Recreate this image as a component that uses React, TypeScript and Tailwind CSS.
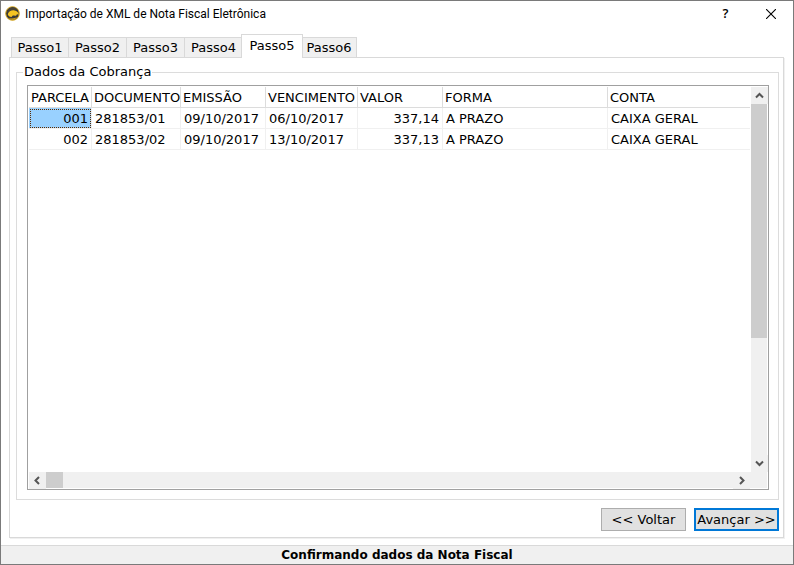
import React from "react";

const tabs = ["Passo1", "Passo2", "Passo3", "Passo4", "Passo5", "Passo6"];
const activeTab = "Passo5";

const columns = [
  { label: "PARCELA", width: "w-[63px]" },
  { label: "DOCUMENTO", width: "w-[89px]" },
  { label: "EMISSÃO", width: "w-[85px]" },
  { label: "VENCIMENTO", width: "w-[92px]" },
  { label: "VALOR", width: "w-[85px]" },
  { label: "FORMA", width: "w-[165px]" },
  { label: "CONTA", width: "" },
];

const rows = [
  ["001", "281853/01", "09/10/2017", "06/10/2017", "337,14", "A PRAZO", "CAIXA GERAL"],
  ["002", "281853/02", "09/10/2017", "13/10/2017", "337,13", "A PRAZO", "CAIXA GERAL"],
];

const rightAligned = [0, 4];

const chevrons = {
  up: "M1 6.5 L4.5 3 L8 6.5",
  down: "M1 2.5 L4.5 6 L8 2.5",
  left: "M6 1 L2.5 4.5 L6 8",
  right: "M3 1 L6.5 4.5 L3 8",
};

function ScrollButton({ direction, label }: { direction: keyof typeof chevrons; label: string }) {
  return (
    <button type="button" aria-label={label} className="flex size-[17px] shrink-0 items-center justify-center bg-[#f0f0f0]">
      <svg width="9" height="9" viewBox="0 0 9 9" fill="none" stroke="#555" strokeWidth="2">
        <path d={chevrons[direction]} />
      </svg>
    </button>
  );
}

function AppIcon() {
  return (
    <svg width="15" height="15" viewBox="0 0 15 15" aria-hidden="true">
      <circle cx="7.5" cy="7.5" r="6.8" fill="#3a3a38" stroke="#d9a91c" strokeWidth="1" />
      <path d="M2 5 C3.4 2.4 6 1 8 1.2 C10.5 1.4 12 2.6 12.8 4 C10 3.4 6 3.6 3 6.6 Z" fill="#4a4436" />
      <path d="M2.8 8.2 C3.6 5.4 6.5 3.8 9.6 4.4 C12 4.8 13.6 6.4 13.9 8.4 L12 8.2 L11 9.8 L8.6 9.4 C7.4 9.4 7 10 6.6 11 C4.6 10.8 3 9.8 2.8 8.2 Z" fill="#f5c421" />
      <path d="M3.4 12 C6 13 9 12.8 12 11.2 C9.8 14.2 6.4 14.4 3.4 12 Z" fill="#e3b01f" />
    </svg>
  );
}

function TitleBar() {
  return (
    <header className="flex h-[25px] items-center pl-1">
      <AppIcon />
      <h1 className="ml-[5px] flex-1 font-[Roboto,sans-serif] text-[12px] leading-4 whitespace-nowrap">
        Importação de XML de Nota Fiscal Eletrônica
      </h1>
      <button type="button" aria-label="Ajuda" className="flex h-full w-[45px] items-center justify-center font-['Open_Sans',sans-serif] text-[13px] font-semibold">
        ?
      </button>
      <button type="button" aria-label="Fechar" className="flex h-full w-[45px] items-center justify-center">
        <svg width="10" height="10" viewBox="0 0 10 10" stroke="#000" strokeWidth="1.1">
          <path d="M0 0 L10 10 M10 0 L0 10" />
        </svg>
      </button>
    </header>
  );
}

function TabStrip() {
  return (
    <div role="tablist" className="flex h-6 items-end pl-[2px]">
      {tabs.map((tab) =>
        tab === activeTab ? (
          <button
            key={tab}
            type="button"
            role="tab"
            aria-selected="true"
            className="z-10 -mr-[2px] -ml-px h-6 w-[62px] border border-b-0 border-[#d9d9d9] bg-white pb-[2px] leading-4"
          >
            {tab}
          </button>
        ) : (
          <button
            key={tab}
            type="button"
            role="tab"
            aria-selected="false"
            className="-mr-px mb-px h-5 w-[59px] border border-b-0 border-[#d9d9d9] bg-[#f0f0f0] leading-4 first:w-[58px] last:w-[56px]"
          >
            {tab}
          </button>
        ),
      )}
    </div>
  );
}

function BillingTable() {
  return (
    <table className="w-full table-fixed border-separate border-spacing-0 text-left whitespace-nowrap">
      <thead>
        <tr>
          {columns.map((column) => (
            <th
              key={column.label}
              scope="col"
              className={`${column.width} h-[21px] border-r border-b border-[#dcdcdc] p-0 pt-px pl-[2px] leading-[19px] font-normal last:border-r-0`}
            >
              {column.label}
            </th>
          ))}
        </tr>
      </thead>
      <tbody>
        {rows.map((row, r) => (
          <tr key={row[0]}>
            {row.map((value, c) => {
              const selected = r === 0 && c === 0;
              return (
                <td
                  key={c}
                  className={`h-[21px] border-r border-b border-[#f0f0f0] p-0 pt-px leading-[19px] last:border-r-0 ${
                    selected ? "bg-[#99d1ff] bg-clip-padding outline-1 -outline-offset-2 outline-dotted outline-[#5a2a00]" : ""
                  } ${rightAligned.includes(c) ? "pr-[3px] text-right" : "pl-[3px]"}`}
                >
                  {value}
                </td>
              );
            })}
          </tr>
        ))}
      </tbody>
    </table>
  );
}

function Grid() {
  return (
    <div className="flex min-h-0 flex-1 flex-col border border-[#a0a0a0] p-px">
      <div className="flex min-h-0 flex-1">
        <div className="min-w-0 flex-1 overflow-hidden pr-px">
          <BillingTable />
        </div>
        <div className="flex w-4 shrink-0 flex-col items-center bg-[#f0f0f0]">
          <ScrollButton direction="up" label="Rolar para cima" />
          <div className="w-full flex-1">
            <div className="h-2/3 bg-[#cdcdcd]" />
          </div>
          <ScrollButton direction="down" label="Rolar para baixo" />
        </div>
      </div>
      <div className="flex h-4 shrink-0 items-center bg-[#f0f0f0] pr-[17px]">
        <ScrollButton direction="left" label="Rolar para a esquerda" />
        <div className="h-full flex-1">
          <div className="h-full w-[17px] bg-[#cdcdcd]" />
        </div>
        <ScrollButton direction="right" label="Rolar para a direita" />
      </div>
    </div>
  );
}

export default function App() {
  return (
    <div className="flex h-screen flex-col border border-[#7a7a7a] bg-white font-['DejaVu_Sans',Verdana,sans-serif] text-[13px] text-black">
      <TitleBar />
      <main className="flex min-h-0 flex-1 flex-col px-2 pt-2 pb-[7px]">
        <TabStrip />
        <div
          role="tabpanel"
          aria-label={activeTab}
          className="-mt-px mr-px flex min-h-0 flex-1 flex-col border border-[#d9d9d9] pr-1 pb-[6px] pl-[6px] shadow-[1px_1px_0_#f0f0f0]"
        >
          <fieldset className="mt-[6px] flex min-h-0 min-w-0 flex-1 flex-col border border-[#dcdcdc] pr-[9px] pb-[9px] pl-[10px]">
            <legend className="-ml-1 px-px leading-4">Dados da Cobrança</legend>
            <div className="mt-[5px] flex min-h-0 flex-1">
              <Grid />
            </div>
          </fieldset>
          <div className="mt-2 flex justify-end gap-2">
            <button type="button" className="h-[23px] w-[85px] border border-[#adadad] bg-[#e1e1e1] whitespace-nowrap">
              &lt;&lt; Voltar
            </button>
            <button type="button" className="h-[23px] w-[85px] border-2 border-[#0078d7] bg-[#e1e1e1] whitespace-nowrap">
              Avançar &gt;&gt;
            </button>
          </div>
        </div>
      </main>
      <footer className="h-[19px] shrink-0 border-t border-[#d9d9d9] bg-[#f0f0f0] text-center text-[12px] leading-[19px] font-bold">
        Confirmando dados da Nota Fiscal
      </footer>
    </div>
  );
}
